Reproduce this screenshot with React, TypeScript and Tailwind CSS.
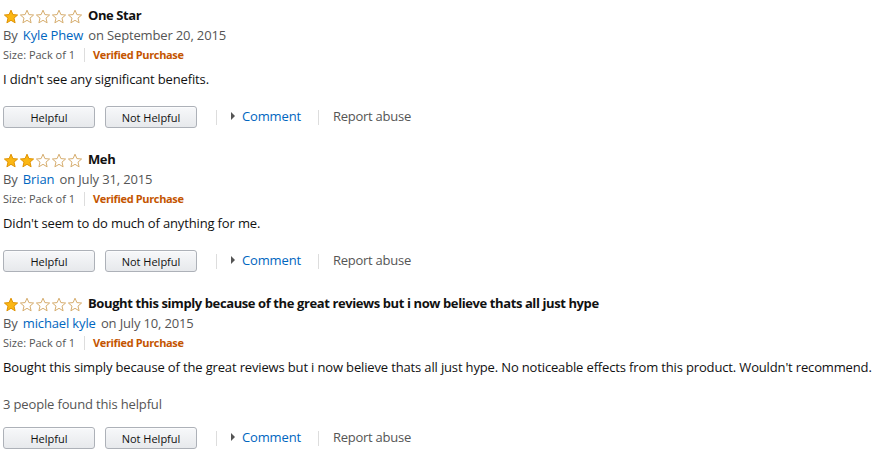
type Review = {
  stars: number;
  title: string;
  author: string;
  date: string;
  body: string;
  helpfulCount?: string;
};

const reviews: Review[] = [
  {
    stars: 1,
    title: "One Star",
    author: "Kyle Phew",
    date: "September 20, 2015",
    body: "I didn't see any significant benefits.",
  },
  {
    stars: 2,
    title: "Meh",
    author: "Brian",
    date: "July 31, 2015",
    body: "Didn't seem to do much of anything for me.",
  },
  {
    stars: 1,
    title: "Bought this simply because of the great reviews but i now believe thats all just hype",
    author: "michael kyle",
    date: "July 10, 2015",
    body: "Bought this simply because of the great reviews but i now believe thats all just hype. No noticeable effects from this product. Wouldn't recommend.",
    helpfulCount: "3 people found this helpful",
  },
];

const STAR = "M8 1.2 L9.9 5.6 L14.6 6 L11 9.1 L12.1 13.8 L8 11.3 L3.9 13.8 L5 9.1 L1.4 6 L6.1 5.6 Z";

const Stars = ({ count }: { count: number }) => (
  <div className="flex">
    {[0, 1, 2, 3, 4].map((i) => (
      <svg key={i} width="16" height="15" viewBox="0 0 16 15">
        {i < count ? (
          <path d={STAR} fill="#fbb714" stroke="#e09200" strokeWidth="1" strokeLinejoin="round" />
        ) : (
          <path d={STAR} fill="#fff" stroke="#d6ad6e" strokeWidth="1" strokeLinejoin="round" />
        )}
      </svg>
    ))}
  </div>
);

const VoteButton = ({ label }: { label: string }) => (
  <button className="w-[92px] h-[22px] rounded-[3px] border border-[#adb1b8] bg-gradient-to-b from-[#f7f8fa] to-[#e7e9ec] text-[11px] text-[#111] leading-none shadow-[inset_0_1px_0_rgba(255,255,255,0.6)]">
    {label}
  </button>
);

const ReviewItem = ({ review }: { review: Review }) => (
  <div className="pt-[6px] pb-[16px]">
    <div className="flex items-center h-[20px]">
      <Stars count={review.stars} />
      <span className="ml-[5px] font-bold text-[13px] tracking-[-0.4px] text-[#111]">{review.title}</span>
    </div>
    <div className="h-[19px] leading-[19px] text-[13px] tracking-[-0.15px] text-[#555]">
      By <a className="text-[#0066c0] mx-[2px]">{review.author}</a> on {review.date}
    </div>
    <div className="flex items-center h-[20px] text-[11px] text-[#555]">
      <span>Size: Pack of 1</span>
      <span className="ml-[9px] mr-[8px] w-px h-[14px] bg-[#ddd]" />
      <span className="font-bold tracking-[-0.35px] text-[#c45500]">Verified Purchase</span>
    </div>
    <p className="mt-[4px] leading-[20px] text-[13px] tracking-[-0.15px] text-[#111]">{review.body}</p>
    {review.helpfulCount && (
      <p className="mt-[17px] leading-[20px] text-[13px] tracking-[-0.15px] text-[#555]">{review.helpfulCount}</p>
    )}
    <div className={`flex items-center h-[22px] ${review.helpfulCount ? "mt-[13px]" : "mt-[17px]"}`}>
      <VoteButton label="Helpful" />
      <div className="ml-[10px] flex">
        <VoteButton label="Not Helpful" />
      </div>
      <span className="ml-[19px] w-px h-[15px] bg-[#ddd]" />
      <span className="ml-[14px] mb-[2px] w-0 h-0 border-y-[4px] border-y-transparent border-l-[4px] border-l-[#555]" />
      <a className="ml-[7px] mb-[2px] text-[13px] leading-[19px] tracking-[-0.15px] text-[#0066c0]">Comment</a>
      <span className="ml-[17px] w-px h-[15px] bg-[#ddd]" />
      <a className="ml-[14px] mb-[2px] text-[13px] leading-[19px] tracking-[-0.25px] text-[#555]">Report abuse</a>
    </div>
  </div>
);

export default function App() {
  return (
    <div className="w-[882px] h-[466px] bg-white pl-[3px] font-['Open_Sans',sans-serif] overflow-hidden">
      {reviews.map((r, i) => (
        <ReviewItem key={i} review={r} />
      ))}
    </div>
  );
}
